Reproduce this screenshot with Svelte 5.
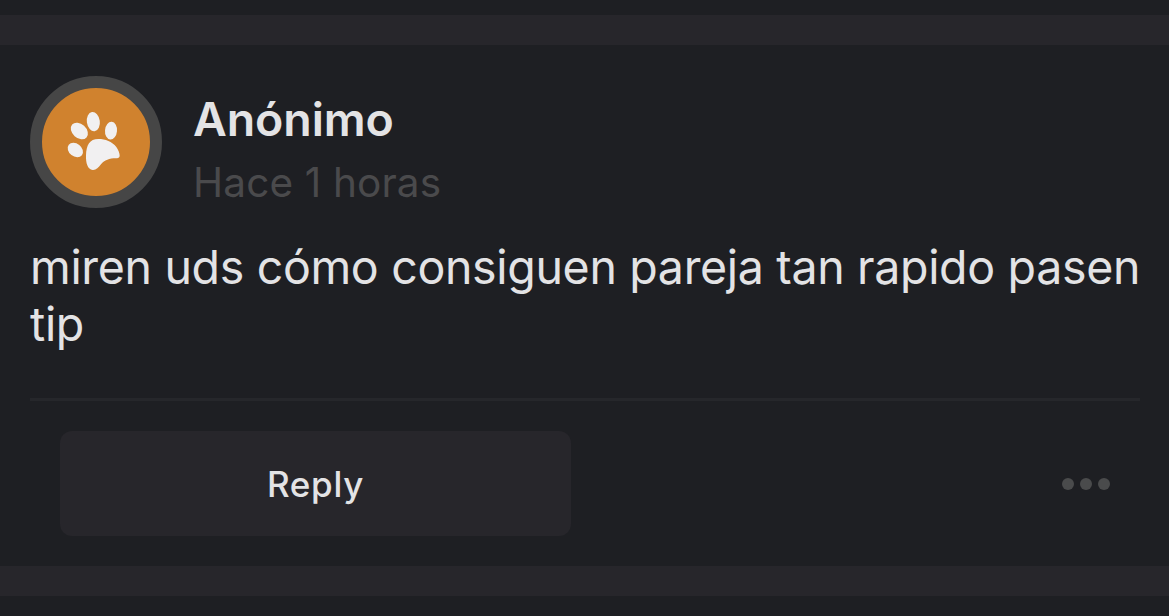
<script lang="ts">
	let author: string = 'Anónimo';
	let time: string = 'Hace 1 horas';
	let message: string = 'miren uds cómo consiguen pareja tan rapido pasen tip';
</script>

<main class="feed">
	<article class="post">
		<header>
			<div class="avatar">
				<svg viewBox="0 0 324 324" aria-hidden="true">
					<g fill="#f1f0f1">
						<ellipse cx="100" cy="186" rx="25" ry="19" transform="rotate(38 100 186)" />
						<ellipse cx="112" cy="129" rx="29" ry="21" transform="rotate(42 112 129)" />
						<ellipse cx="154" cy="101" rx="19.5" ry="29" transform="rotate(-8 154 101)" />
						<ellipse cx="207" cy="128" rx="18" ry="26.5" transform="rotate(5 207 128)" />
						<path d="M169 153C190 153 210 161 223 177C229 185 233 196 233 203C233 209 228 211 221 211C203 211 187 216 177 229C169 239 162 247 152 246C137 245 131 225 132 202C133 171 143 153 169 153Z" />
					</g>
				</svg>
			</div>
			<div class="meta">
				<h2>{author}</h2>
				<time>{time}</time>
			</div>
		</header>
		<p>{message}</p>
		<footer>
			<button class="reply">Reply</button>
			<button class="more" aria-label="More">
				<i></i><i></i><i></i>
			</button>
		</footer>
	</article>
</main>

<style>
	:global(body) {
		background: #1e1f23;
	}

	.feed {
		box-sizing: border-box;
		height: 616px;
		padding-top: 15px;
		overflow: hidden;
		background: #1e1f23;
		color: #e3e3e5;
		font-family: Inter, 'Liberation Sans', sans-serif;
	}

	.post {
		box-sizing: border-box;
		height: 581px;
		padding: 31px 29px 0 30px;
		border-top: 30px solid #27262b;
		border-bottom: 30px solid #27262b;
	}

	header {
		display: flex;
		gap: 31px;
		height: 132px;
	}

	.avatar {
		box-sizing: border-box;
		width: 132px;
		height: 132px;
		border: 12px solid #464646;
		border-radius: 50%;
		background: #d0822e;
	}

	.avatar svg {
		display: block;
		width: 108px;
		height: 108px;
	}

	.meta {
		padding-top: 12px;
	}

	h2 {
		margin: 0;
		font-size: 46.5px;
		font-weight: 600;
		line-height: 62px;
		letter-spacing: -0.1px;
	}

	time {
		display: block;
		color: #4a4a4c;
		font-size: 40.5px;
		line-height: 66px;
		letter-spacing: 0.15px;
	}

	p {
		height: 114px;
		margin: 31px -10px 45px 0;
		font-size: 46.5px;
		line-height: 57px;
		letter-spacing: -0.33px;
	}

	footer {
		display: flex;
		justify-content: space-between;
		align-items: center;
		padding: 30px 30px 0;
		border-top: 3px solid #26272b;
	}

	button {
		padding: 0;
		border: 0;
		color: inherit;
		font-family: inherit;
		cursor: pointer;
	}

	.reply {
		width: 511px;
		height: 105px;
		border-radius: 12px;
		background: #27262b;
		font-size: 35px;
		font-weight: 500;
		letter-spacing: 0.7px;
	}

	.more {
		display: flex;
		gap: 6px;
		background: none;
	}

	.more i {
		width: 12px;
		height: 12px;
		border-radius: 50%;
		background: #4a4b4c;
	}
</style>
